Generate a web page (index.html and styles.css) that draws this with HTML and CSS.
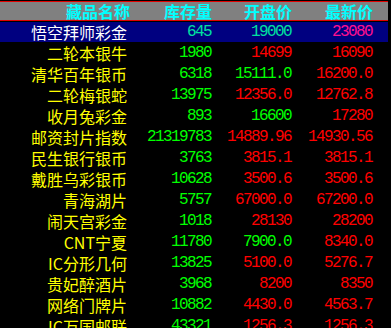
FILE: index.html
```html
<!DOCTYPE html>
<html lang="zh">
<head>
<meta charset="utf-8">
<link rel="stylesheet" href="styles.css">
</head>
<body>
<div class="board">
  <div class="row head">
    <div class="c name">藏品名称</div>
    <div class="c">库存量</div>
    <div class="c">开盘价</div>
    <div class="c">最新价</div>
  </div>
  <div class="rows">
    <div class="row sel"><div class="c name">悟空拜师彩金</div><div class="c n sc">645</div><div class="c n sc">19000</div><div class="c n pk">23080</div></div>
    <div class="row"><div class="c name">二轮本银牛</div><div class="c n g">1980</div><div class="c n r">14699</div><div class="c n r">16090</div></div>
    <div class="row"><div class="c name">清华百年银币</div><div class="c n g">6318</div><div class="c n g">15111.0</div><div class="c n r">16200.0</div></div>
    <div class="row"><div class="c name">二轮梅银蛇</div><div class="c n g">13975</div><div class="c n r">12356.0</div><div class="c n r">12762.8</div></div>
    <div class="row"><div class="c name">收月兔彩金</div><div class="c n g">893</div><div class="c n g">16600</div><div class="c n r">17280</div></div>
    <div class="row"><div class="c name">邮资封片指数</div><div class="c n g">21319783</div><div class="c n r">14889.96</div><div class="c n r">14930.56</div></div>
    <div class="row"><div class="c name">民生银行银币</div><div class="c n g">3763</div><div class="c n r">3815.1</div><div class="c n r">3815.1</div></div>
    <div class="row"><div class="c name">戴胜乌彩银币</div><div class="c n g">10628</div><div class="c n r">3500.6</div><div class="c n r">3500.6</div></div>
    <div class="row"><div class="c name">青海湖片</div><div class="c n g">5757</div><div class="c n r">67000.0</div><div class="c n r">67200.0</div></div>
    <div class="row"><div class="c name">闹天宫彩金</div><div class="c n g">1018</div><div class="c n r">28130</div><div class="c n r">28200</div></div>
    <div class="row"><div class="c name">CNT宁夏</div><div class="c n g">11780</div><div class="c n g">7900.0</div><div class="c n r">8340.0</div></div>
    <div class="row"><div class="c name">IC分形几何</div><div class="c n g">13825</div><div class="c n r">5100.0</div><div class="c n r">5276.7</div></div>
    <div class="row"><div class="c name">贵妃醉酒片</div><div class="c n g">3968</div><div class="c n r">8200</div><div class="c n r">8350</div></div>
    <div class="row"><div class="c name">网络门牌片</div><div class="c n g">10882</div><div class="c n r">4430.0</div><div class="c n r">4563.7</div></div>
    <div class="row"><div class="c name">IC万国邮联</div><div class="c n g">43321</div><div class="c n r">1256.3</div><div class="c n r">1256.3</div></div>
  </div>
</div>
</body>
</html>
```

FILE: styles.css
```css
html, body {
  margin: 0;
  padding: 0;
  background: #000;
  overflow: hidden;
}
.board {
  width: 388px;
  padding-top: 1px;
  font-family: "Noto Sans CJK SC", sans-serif;
  font-size: 16px;
}
.row {
  display: grid;
  grid-template-columns: 130px 82px 80px 81px;
  height: 21px;
  line-height: 21px;
  white-space: nowrap;
}
.c {
  text-align: right;
  overflow: visible;
}
.name {
  color: #ffff00;
  padding-right: 3px;
}
.head {
  box-sizing: border-box;
  height: 20px;
  line-height: 18px;
  background: #808080;
  border-top: 1px solid #e00000;
  border-bottom: 1px solid #e00000;
  color: #00ffff;
  font-weight: bold;
}
.head .name {
  color: #00ffff;
  padding-right: 0;
}
.rows {
  padding-top: 1px;
}
.sel {
  background: #000080;
  height: 20px;
  line-height: 20px;
  margin-bottom: 1px;
}
.sel .name {
  color: #ffffff;
}
.n {
  font-family: "Liberation Mono", monospace;
  letter-spacing: -1.6px;
  padding-right: 1px;
}
.g { color: #00ff00; }
.r { color: #ff0000; }
.sc { color: #00e0a0; }
.pk { color: #ff1090; }
```
